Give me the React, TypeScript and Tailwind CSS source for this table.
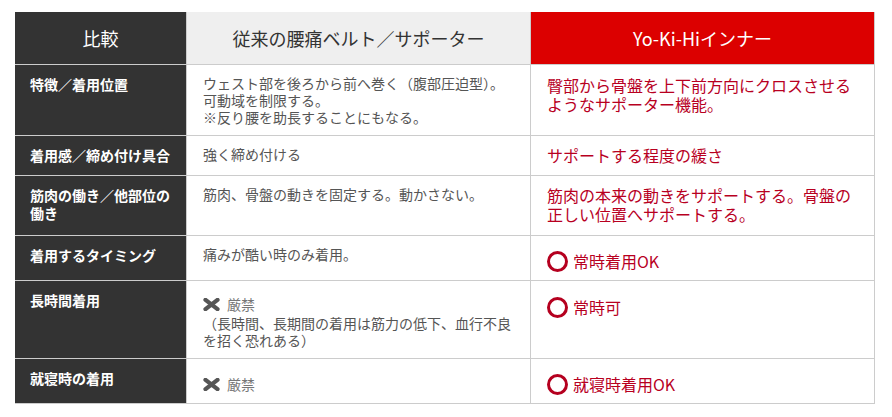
import React from "react";

const font = { fontFamily: '"Noto Sans CJK JP", "Noto Sans", sans-serif' };

function XMark() {
  return (
    <svg width="17" height="13" viewBox="0 0 17 13" className="shrink-0">
      <path d="M2.5 1.8 L14.5 11.2 M14.5 1.8 L2.5 11.2" stroke="#555" strokeWidth="4.2" strokeLinecap="round" />
    </svg>
  );
}

function Circle() {
  return <span className="inline-block w-[21px] h-[21px] rounded-full border-[3.5px] border-[#b5001f] shrink-0" />;
}

type Row = {
  h: string;
  label: React.ReactNode;
  mid: React.ReactNode;
  right: React.ReactNode;
};

const midText = "text-[14px] leading-[17px] text-[#555] pt-[10px] px-[16px]";
const rightText = "text-[16px] leading-[19px] text-[#b8001f] pt-[10px] px-[16px]";

const rows: Row[] = [
  {
    h: "h-[71px]",
    label: "特徴／着用位置",
    mid: (
      <div className={midText}>
        ウェスト部を後ろから前へ巻く（腹部圧迫型）。
        <br />
        可動域を制限する。
        <br />
        ※反り腰を助長することにもなる。
      </div>
    ),
    right: (
      <div className={rightText + " pt-[11px]"}>
        臀部から骨盤を上下前方向にクロスさせる
        <br />
        ようなサポーター機能。
      </div>
    ),
  },
  {
    h: "h-[40px]",
    label: "着用感／締め付け具合",
    mid: <div className={midText}>強く締め付ける</div>,
    right: <div className={rightText}>サポートする程度の緩さ</div>,
  },
  {
    h: "h-[60px]",
    label: (
      <>
        筋肉の働き／他部位の
        <br />
        働き
      </>
    ),
    mid: <div className={midText}>筋肉、骨盤の動きを固定する。動かさない。</div>,
    right: (
      <div className={rightText}>
        筋肉の本来の動きをサポートする。骨盤の
        <br />
        正しい位置へサポートする。
      </div>
    ),
  },
  {
    h: "h-[45px]",
    label: "着用するタイミング",
    mid: <div className={midText}>痛みが酷い時のみ着用。</div>,
    right: (
      <div className="pt-[10px] px-[16px] h-[40px] flex items-center gap-[5px] text-[16px] text-[#b8001f]">
        <Circle />
        <span>常時着用OK</span>
      </div>
    ),
  },
  {
    h: "h-[78px]",
    label: "長時間着用",
    mid: (
      <div className="pt-[10px] px-[16px] text-[14px] leading-[17px] text-[#555]">
        <div className="h-[24px] flex items-center gap-[7px] pt-[3px]">
          <XMark />
          <span className="text-[#777]">厳禁</span>
        </div>
        <div>
          （長時間、長期間の着用は筋力の低下、血行不良
          <br />
          を招く恐れある）
        </div>
      </div>
    ),
    right: (
      <div className="pt-[10px] px-[16px] h-[42px] flex items-center gap-[5px] text-[16px] text-[#b8001f]">
        <Circle />
        <span>常時可</span>
      </div>
    ),
  },
  {
    h: "h-[45px]",
    label: "就寝時の着用",
    mid: (
      <div className="pt-[10px] px-[16px] text-[14px] leading-[17px] text-[#555]">
        <div className="h-[28px] flex items-center gap-[7px] pt-[3px]">
          <XMark />
          <span className="text-[#777]">厳禁</span>
        </div>
      </div>
    ),
    right: (
      <div className="pt-[10px] px-[16px] h-[40px] flex items-center gap-[5px] text-[16px] text-[#b8001f]">
        <Circle />
        <span>就寝時着用OK</span>
      </div>
    ),
  },
];

export default function App() {
  return (
    <div className="w-[892px] h-[417px] bg-white pt-[12px] pl-[15px]" style={font}>
      <div className="w-[860px] flex flex-col">
        <div className="flex h-[53px] border-b border-[#ccc]">
          <div className="w-[172px] bg-[#333] border-r border-[#ccc] flex items-center justify-center text-white text-[18px]">
            比較
          </div>
          <div className="w-[344px] bg-[#efefef] border-r border-[#ccc] flex items-center justify-center text-[#333] text-[18px]">
            従来の腰痛ベルト／サポーター
          </div>
          <div className="w-[344px] bg-[#dc0000] border-r border-[#ccc] flex items-center justify-center text-white text-[18px]">
            Yo-Ki-Hiインナー
          </div>
        </div>
        {rows.map((r, i) => (
          <div key={i} className={"flex border-b border-[#ccc] " + r.h}>
            <div className="w-[172px] bg-[#333] border-r border-[#ccc] text-white font-bold text-[14px] leading-[18px] pt-[10px] px-[15px]">
              {r.label}
            </div>
            <div className="w-[344px] border-r border-[#ccc]">{r.mid}</div>
            <div className="w-[344px] border-r border-[#ccc]">{r.right}</div>
          </div>
        ))}
      </div>
    </div>
  );
}
